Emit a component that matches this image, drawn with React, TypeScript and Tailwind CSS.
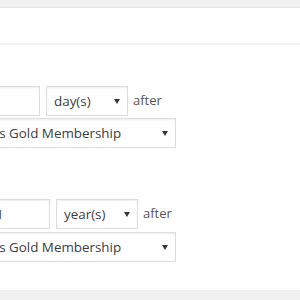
import React from "react";

const Arrow = () => (
  <span className="ml-auto h-0 w-0 border-x-[3.5px] border-t-[5px] border-x-transparent border-t-[#32373c]" />
);

const Box = ({ text, className }: { text: string; className: string }) => (
  <div
    className={`flex h-[30px] shrink-0 items-center border border-[#ddd] bg-white pl-[7px] pr-[7px] text-[13.4px] text-[#3c3c3c] shadow-[inset_0_1px_2px_rgba(0,0,0,0.07)] ${className}`}
  >
    <span className="whitespace-nowrap">{text}</span>
    <Arrow />
  </div>
);

const NumberBox = ({ value, className }: { value: string; className: string }) => (
  <div
    className={`flex h-[30px] shrink-0 items-center border border-[#ddd] bg-white pl-[8px] text-[13.4px] text-[#3c3c3c] shadow-[inset_0_1px_2px_rgba(0,0,0,0.07)] ${className}`}
  >
    {value}
  </div>
);

export default function App() {
  return (
    <div className="h-[300px] w-full overflow-hidden bg-white font-['Open_Sans',sans-serif]">
      <div className="h-[8px] border-b border-[#e5e5e5] bg-[#f1f1f1]" />
      <div className="h-[37px] border-b-[2px] border-[#f3f3f3]" />

      {/* first reminder */}
      <div className="mt-[41px] flex flex-col gap-[2px]">
        <div className="-ml-[60px] flex items-center">
          <NumberBox value="" className="w-[100px]" />
          <Box text="day(s)" className="ml-[6px] w-[82px]" />
          <span className="ml-[5px] text-[13px] text-[#555]">after</span>
        </div>
        <div className="-ml-[62px] flex">
          <Box text="Members Gold Membership" className="w-[238px]" />
        </div>
      </div>

      {/* second reminder */}
      <div className="mt-[51px] flex flex-col gap-[3px]">
        <div className="-ml-[13px] flex items-center">
          <NumberBox value="1" className="w-[63px]" />
          <Box text="year(s)" className="ml-[6px] w-[82px]" />
          <span className="ml-[5px] text-[13px] text-[#555]">after</span>
        </div>
        <div className="-ml-[62px] flex">
          <Box text="Members Gold Membership" className="w-[238px]" />
        </div>
      </div>

      <div className="mt-[28px] h-[20px] bg-[#f1f1f1]" />
    </div>
  );
}
